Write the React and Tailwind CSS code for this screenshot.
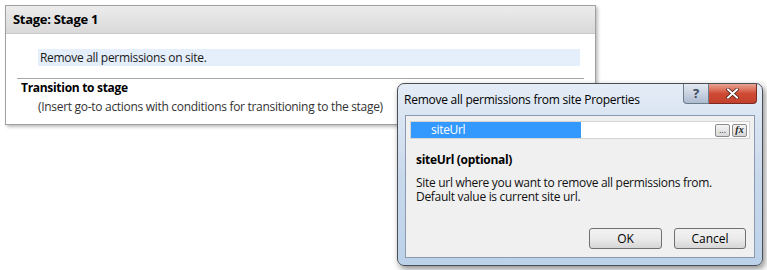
import React from 'react';

const font = { fontFamily: '"Open Sans", "Noto Sans", sans-serif' };

const StagePanel = () => (
  <div className="ml-[5px] mt-[5px] w-[591px] h-[120px] border border-[#a0a0a0] bg-white shadow-[2px_2px_3px_rgba(0,0,0,0.25)]">
    {/* Header */}
    <div className="h-[28px] flex items-center pl-[7px] bg-gradient-to-b from-[#ececec] to-[#d9d9d9] border-b border-[#c8c8c8]">
      <span className="text-[13px] font-bold text-black tracking-[-0.3px]">Stage: Stage 1</span>
    </div>
    <div className="pt-[15px] pl-[32px] pr-[15px]">
      <div className="h-[17px] bg-[#e5eefb] flex items-center pl-[2px] text-[12px] tracking-[-0.3px] text-[#1a1a1a]">
        Remove all permissions on site.
      </div>
    </div>
    <div className="mx-[11px] mt-[12px] border-t border-[#a8a8a8]" />
    <div className="pl-[15px] pt-[1px] text-[12px] font-bold tracking-[-0.3px] text-black leading-[16px]">Transition to stage</div>
    <div className="pl-[32px] pt-[3px] text-[12px] tracking-[-0.3px] text-[#333] leading-[16px]">
      (Insert go-to actions with conditions for transitioning to the stage)
    </div>
  </div>
);

const Dialog = () => (
  <div className="absolute left-[397px] top-[83px] w-[366px] h-[183px] rounded-[7px] border border-[#4b4f55] bg-gradient-to-b from-[#e4ecf6] via-[#c9d9ec] to-[#bcd2ea] shadow-[2px_3px_6px_rgba(0,0,0,0.45)] flex flex-col">
    {/* Title bar */}
    <div className="h-[31px] flex items-start relative">
      <span className="pl-[6px] pt-[7px] text-[12px] tracking-[-0.25px] text-black">Remove all permissions from site Properties</span>
      <div className="absolute right-[5px] top-[0px] flex">
        <div className="w-[26px] h-[20px] rounded-bl-[4px] border border-[#6d7b8d] border-t-0 bg-gradient-to-b from-[#e3e9f1] to-[#aebcd0] flex items-center justify-center text-[13px] font-bold text-[#39495e] leading-none">?</div>
        <div className="w-[48px] h-[20px] rounded-br-[4px] border border-[#7a2a22] border-t-0 border-l-0 bg-gradient-to-b from-[#e8a493] via-[#cf4a35] to-[#c2412c] flex items-center justify-center">
          <svg width="13" height="11" viewBox="0 0 13 11">
            <path d="M2 1.5 L11 9.5 M11 1.5 L2 9.5" stroke="#3b1410" strokeWidth="3.4" strokeLinecap="square" />
            <path d="M2 1.5 L11 9.5 M11 1.5 L2 9.5" stroke="#fff" strokeWidth="2" strokeLinecap="square" />
          </svg>
        </div>
      </div>
    </div>
    {/* Client area */}
    <div className="mx-[7px] mb-[7px] flex-1 bg-[#f0f0f0] border border-[#8a9bb0] flex flex-col">
      <div className="mx-[4px] mt-[5px] h-[18px] bg-white border border-[#d5d5d5] flex items-center">
        <div className="w-[170px] h-full bg-[#3399ff] text-white text-[12px] tracking-[-0.3px] pl-[20px] flex items-center">siteUrl</div>
        <div className="flex-1" />
        <div className="flex gap-[2px] pr-[2px]">
          <div className="w-[15px] h-[13px] rounded-[2px] border border-[#8c8c8c] bg-gradient-to-b from-[#f5f5f5] to-[#d8d8d8] text-[9px] leading-[8px] text-[#333] flex items-center justify-center">...</div>
          <div className="w-[15px] h-[13px] rounded-[2px] border border-[#8c8c8c] bg-gradient-to-b from-[#f5f5f5] to-[#d8d8d8] flex items-center justify-center">
            <span className="text-[10px] italic font-bold text-[#222] leading-none" style={{ fontFamily: '"Liberation Serif", serif' }}>fx</span>
          </div>
        </div>
      </div>
      <div className="pl-[10px] pt-[12px] text-[12px] font-bold tracking-[-0.3px] text-black">siteUrl (optional)</div>
      <div className="pl-[10px] pt-[7px] text-[12px] tracking-[-0.3px] text-[#111] leading-[14px]">
        <div>Site url where you want to remove all permissions from.</div>
        <div>Default value is current site url.</div>
      </div>
      <div className="flex-1" />
      <div className="flex justify-end gap-[12px] pr-[8px] pb-[8px]">
        <button className="w-[73px] h-[21px] rounded-[3px] border border-[#707070] bg-gradient-to-b from-[#f2f2f2] via-[#ebebeb] to-[#d6d6d6] text-[12px] text-black">OK</button>
        <button className="w-[72px] h-[21px] rounded-[3px] border border-[#707070] bg-gradient-to-b from-[#f2f2f2] via-[#ebebeb] to-[#d6d6d6] text-[12px] text-black">Cancel</button>
      </div>
    </div>
  </div>
);

export default function App() {
  return (
    <div className="relative w-[767px] h-[270px] bg-white overflow-hidden" style={font}>
      <StagePanel />
      <Dialog />
    </div>
  );
}
